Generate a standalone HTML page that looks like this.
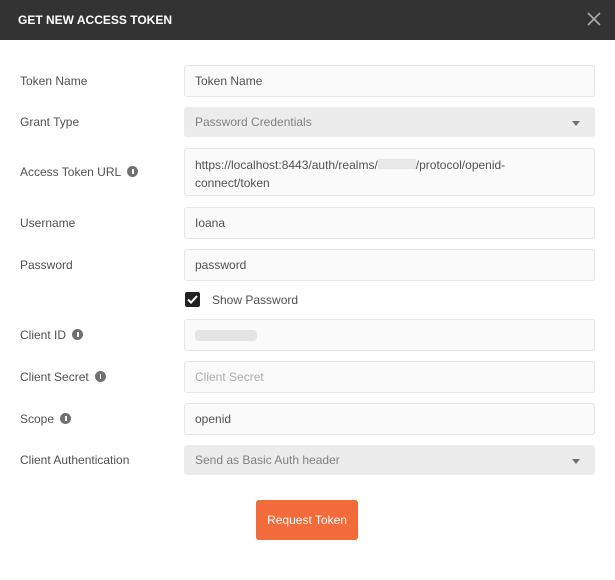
<!DOCTYPE html>
<html><head><style>
*{box-sizing:border-box;margin:0;padding:0}
body{width:615px;height:580px;background:#fff;font-family:"Liberation Sans",sans-serif;font-size:12px;color:#505050;position:relative;overflow:hidden}
.hdr{position:absolute;left:0;top:0;width:615px;height:40px;background:#333;color:#fff;font-size:12px;font-weight:bold}
.hdr .t{position:absolute;left:18px;top:13px}
.x{position:absolute;right:13px;top:11px;width:16px;height:16px}
.lbl{position:absolute;left:20px;color:#505050}
.in{position:absolute;left:184px;width:411px;background:#fafafa;border:1px solid #e6e6e6;border-radius:3px;padding-left:10px;color:#505050}
.sel{background:#ececec;border-color:#ececec;color:#808080}
.sel:after{content:"";position:absolute;right:14px;top:13px;border-left:4px solid transparent;border-right:4px solid transparent;border-top:5px solid #707070}
.i{display:inline-block;width:11px;height:11px;border-radius:50%;background:#707070;vertical-align:-1px;margin-left:6px;position:relative}
.i:after{content:"";position:absolute;left:5px;top:3px;width:1.5px;height:5px;background:#fff}
.btn{position:absolute;left:256px;top:500px;width:102px;height:40px;background:#f26b3a;border-radius:3px;color:#fff;text-align:center;line-height:40px;font-size:12px}
</style></head><body>
<div class="hdr"><span class="t">GET NEW ACCESS TOKEN</span>
<svg class="x" viewBox="0 0 16 16"><path d="M2 2L14 14M14 2L2 14" stroke="#aaa" stroke-width="1.6"/></svg></div>

<div class="lbl" style="top:74px">Token Name</div>
<div class="in" style="top:65px;height:32px;line-height:30px">Token Name</div>

<div class="lbl" style="top:115px">Grant Type</div>
<div class="in sel" style="top:107px;height:30px;line-height:28px">Password Credentials</div>

<div class="lbl" style="top:165px">Access Token URL<span class="i"></span></div>
<div class="in" style="top:148px;height:48px;padding-top:7px;line-height:18px">https://localhost:8443/auth/realms/<span style="display:inline-block;width:38px;height:10px;background:#e8e8e8"></span>/protocol/openid-<br>connect/token</div>

<div class="lbl" style="top:216px">Username</div>
<div class="in" style="top:207px;height:32px;line-height:30px">Ioana</div>

<div class="lbl" style="top:258px">Password</div>
<div class="in" style="top:249px;height:32px;line-height:30px">password</div>

<div style="position:absolute;left:185px;top:292px;width:15px;height:15px;background:#222;border-radius:2px">
<svg width="15" height="15" viewBox="0 0 15 15"><path d="M3 7.5L6 10.5L12 4" stroke="#fff" stroke-width="2" fill="none"/></svg></div>
<div class="lbl" style="left:212px;top:293px">Show Password</div>

<div class="lbl" style="top:328px">Client ID<span class="i"></span></div>
<div class="in" style="top:319px;height:32px"><span style="position:absolute;left:10px;top:10px;width:62px;height:11px;background:#e4e4e4;border-radius:4px"></span></div>

<div class="lbl" style="top:370px">Client Secret<span class="i"></span></div>
<div class="in" style="top:361px;height:32px;line-height:30px;color:#aaa">Client Secret</div>

<div class="lbl" style="top:412px">Scope<span class="i"></span></div>
<div class="in" style="top:403px;height:32px;line-height:30px">openid</div>

<div class="lbl" style="top:453px">Client Authentication</div>
<div class="in sel" style="top:445px;height:30px;line-height:28px">Send as Basic Auth header</div>

<div class="btn">Request Token</div>
</body></html>
